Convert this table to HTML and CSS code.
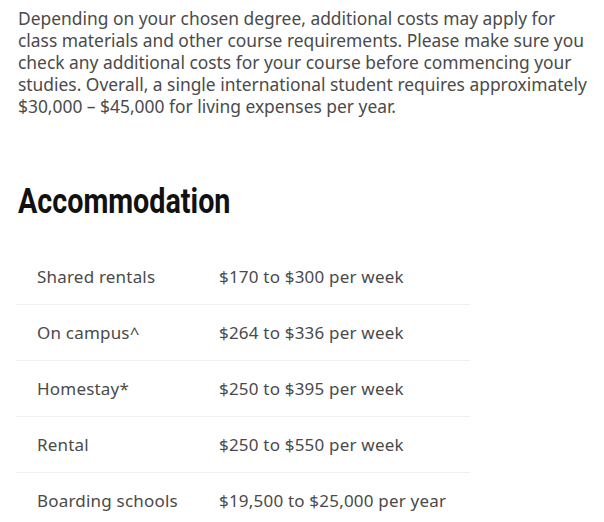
FILE: index.html
```html
<!DOCTYPE html>
<html lang="en">
<head>
<meta charset="utf-8">
<link rel="stylesheet" href="styles.css">
</head>
<body>
<main class="content">
  <p class="intro">Depending on your chosen degree, additional costs may apply for class materials and other course requirements. Please make sure you check any additional costs for your course before commencing your studies. Overall, a single international student requires approximately $30,000 – $45,000 for living expenses per year.</p>
  <h2 class="section-title">Accommodation</h2>
  <table class="costs">
    <tbody>
      <tr><td class="label">Shared rentals</td><td class="value">$170 to $300 per week</td></tr>
      <tr><td class="label">On campus^</td><td class="value">$264 to $336 per week</td></tr>
      <tr><td class="label">Homestay*</td><td class="value">$250 to $395 per week</td></tr>
      <tr><td class="label">Rental</td><td class="value">$250 to $550 per week</td></tr>
      <tr><td class="label">Boarding schools</td><td class="value">$19,500 to $25,000 per year</td></tr>
    </tbody>
  </table>
</main>
</body>
</html>
```
FILE: styles.css
```css
html, body {
  margin: 0;
  padding: 0;
  background: #ffffff;
}
.content {
  padding: 7px 10px 0 18px;
  font-family: "Noto Sans", "Open Sans", sans-serif;
  color: #4a4a4a;
}
.intro {
  margin: 0;
  font-size: 17.4px;
  line-height: 22px;
}
.section-title {
  margin: 65px 0 0 0;
  font-family: Roboto, sans-serif;
  font-weight: 700;
  font-size: 35px;
  line-height: 40px;
  color: #111111;
  transform: scaleX(0.82);
  transform-origin: left center;
}
.costs {
  margin: 27px 0 0 -2px;
  border-collapse: collapse;
  width: 454px;
  font-size: 17px;
  letter-spacing: 0.2px;
}
.costs tr {
  border-bottom: 1px solid #efefef;
}
.costs tr:last-child {
  border-bottom: none;
}
.costs td {
  height: 55px;
  padding: 0;
  vertical-align: middle;
}
.costs .label {
  width: 182px;
  padding-left: 21px;
}
```
